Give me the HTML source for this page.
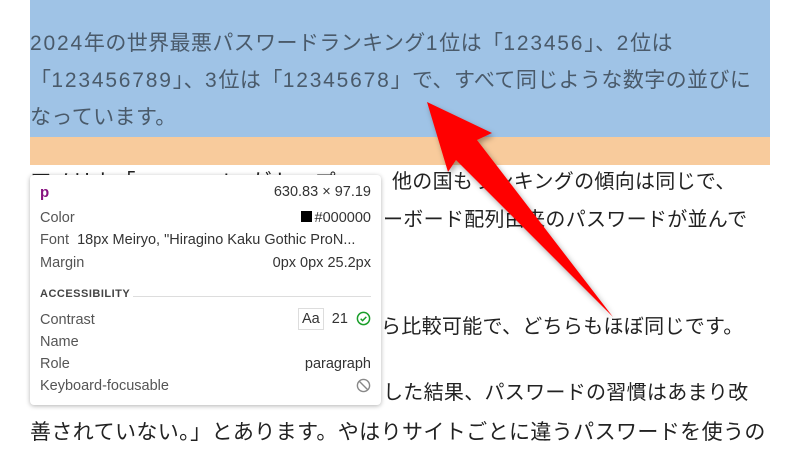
<!DOCTYPE html>
<html><head><meta charset="utf-8"><style>
body{margin:0;width:800px;height:443px;overflow:hidden;background:#fff;font-family:"Liberation Sans","Noto Sans CJK JP",sans-serif;position:relative}
.blue{position:absolute;left:30px;top:0;width:740px;height:137px;background:#9fc3e6}
.orange{position:absolute;left:30px;top:137px;width:740px;height:28px;background:#f8cb9c}
.t{position:absolute;left:30px;font-size:21px;letter-spacing:0.4px;line-height:37px;white-space:nowrap;color:#222}
.s{font-size:20px;letter-spacing:0.3px}
.n{letter-spacing:1.8px}
.tip{position:absolute;left:30px;top:175px;width:351px;height:230px;background:#fff;border-radius:4px;box-shadow:0 1px 5px rgba(0,0,0,.3);font-size:14.5px;color:#555}
.tip div{position:absolute;white-space:nowrap}
.r{right:10px}
</style></head><body>
<div class="blue"></div><div class="orange"></div>
<div class="t" style="top:25px;color:#4a5a6a"><span class="n">2024</span>年の世界最悪パスワードランキング<span class="n">1</span>位は「<span class="n">123456</span>」、<span class="n">2</span>位は<br>「<span class="n">123456789</span>」、<span class="n">3</span>位は「<span class="n">12345678</span>」で、すべて同じような数字の並びに<br>なっています。</div>
<div class="t" style="top:164px">アメリカ「password」がトップ。</div>
<div class="t s" style="top:164px;left:392px">他の国もランキングの傾向は同じで、</div>
<div class="t s" style="top:202px;left:383px">ーボード配列由来のパスワードが並んで</div>
<div class="t s" style="top:309px;left:381px">ら比較可能で、どちらもほぼ同じです。</div>
<div class="t s" style="top:375px;left:383px">した結果、パスワードの習慣はあまり改</div>
<div class="t" style="top:414px">善されていない。」とあります。やはりサイトごとに違うパスワードを使うの</div>
<div class="tip">
<div style="left:10px;top:9px;color:#881280;font-weight:bold;font-size:15px">p</div>
<div class="r" style="top:9px;color:#333">630.83 × 97.19</div>
<div style="left:10px;top:35px">Color</div>
<div class="r" style="top:35px;color:#333"><span style="display:inline-block;width:11px;height:11px;background:#000;margin-right:3px"></span>#000000</div>
<div style="left:10px;top:57px">Font&nbsp;&nbsp;<span style="color:#333">18px Meiryo, "Hiragino Kaku Gothic ProN...</span></div>
<div style="left:10px;top:80px">Margin</div>
<div class="r" style="top:80px;color:#333">0px 0px 25.2px</div>
<div style="left:10px;top:113px;font-size:11px;font-weight:bold;letter-spacing:.5px;color:#444">ACCESSIBILITY</div>
<div style="left:103px;right:10px;top:121px;height:1px;background:#ddd"></div>
<div style="left:10px;top:137px">Contrast</div>
<div class="r" style="top:133px;color:#333"><span style="display:inline-block;border:1px solid #ddd;padding:2px 3px">Aa</span>&nbsp;&nbsp;21&nbsp;&nbsp;<svg width="15" height="15" viewBox="0 0 16 16" style="vertical-align:-3px"><circle cx="8" cy="8" r="6.5" fill="none" stroke="#1a9e2a" stroke-width="1.6"/><path d="M5 8.3l2 2 4-4" fill="none" stroke="#1a9e2a" stroke-width="1.6"/></svg></div>
<div style="left:10px;top:159px">Name</div>
<div style="left:10px;top:181px">Role</div>
<div class="r" style="top:181px;color:#333">paragraph</div>
<div style="left:10px;top:203px">Keyboard-focusable</div>
<div class="r" style="top:203px"><svg width="15" height="15" viewBox="0 0 16 16"><circle cx="8" cy="8" r="6.5" fill="none" stroke="#888" stroke-width="1.5"/><path d="M3.5 3.5l9 9" stroke="#888" stroke-width="1.5"/></svg></div>
</div>
<svg style="position:absolute;left:0;top:0" width="800" height="443"><defs><filter id="s"><feDropShadow dx="2" dy="3" stdDeviation="3" flood-opacity=".35"/></filter></defs>
<polygon points="427,102 492,133 477,140 613,317 456,160 448,172" fill="#f00" filter="url(#s)"/></svg>
</body></html>
